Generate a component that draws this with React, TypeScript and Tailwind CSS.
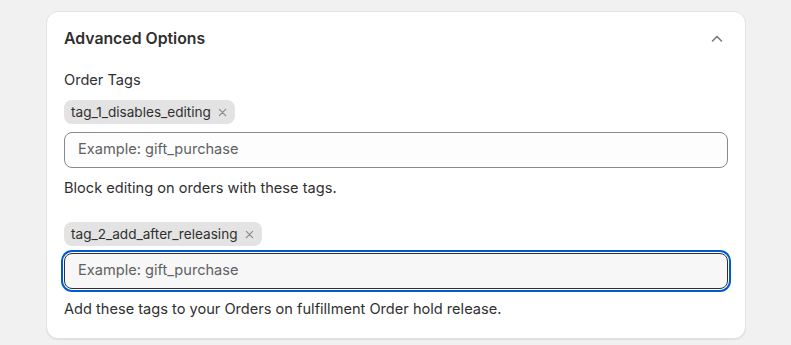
import React from 'react';

const TagChip = ({ label }: { label: string }) => (
  <div className="inline-flex items-center gap-[7px] rounded-lg bg-[#e3e3e3] pl-[7px] pr-[8px] h-[24px] text-[13.6px] text-[#303030]">
    <span>{label}</span>
    <svg width="9" height="9" viewBox="0 0 10 10" fill="none" stroke="#8a8a8a" strokeWidth="1.3" strokeLinecap="round">
      <path d="M1.5 1.5l7 7M8.5 1.5l-7 7" />
    </svg>
  </div>
);

export default function App() {
  return (
    <div className="min-h-[345px] bg-[#f1f1f1] pl-[46px] pr-[45px] pt-[11px] pb-2" style={{ fontFamily: 'Inter, "Noto Sans", sans-serif' }}>
      <div className="rounded-xl bg-white border border-[#e3e3e3] shadow-[0_1px_0_rgba(0,0,0,0.08)] px-[17px] pt-[16px] pb-[19px]">
        <div className="flex items-center justify-between h-[22px]">
          <h2 className="text-[15.8px] font-semibold text-[#303030]">Advanced Options</h2>
          <svg width="12" height="8" viewBox="0 0 12 8" fill="none" stroke="#7a7a7a" strokeWidth="1.6" strokeLinecap="round" strokeLinejoin="round" className="mr-[5px]">
            <path d="M1.5 6l4.5-4.5 4.5 4.5" />
          </svg>
        </div>

        <div className="text-[14.6px] text-[#303030]">
          <div className="mt-[20px] h-[20px] leading-5">Order Tags</div>
          <div className="mt-[10px] flex">
            <TagChip label="tag_1_disables_editing" />
          </div>
          <div className="mt-[8px] h-[36px] rounded-lg border border-[#8a8a8a] bg-[#fdfdfd] flex items-center px-[13px] text-[#616161]">
            Example: gift_purchase
          </div>
          <div className="mt-[10px] h-[20px] leading-5">Block editing on orders with these tags.</div>

          <div className="mt-[24px] flex">
            <TagChip label="tag_2_add_after_releasing" />
          </div>
          <div className="mt-[7px] h-[36px] rounded-lg border border-[#303030] bg-[#f7f7f7] flex items-center px-[13px] text-[#616161] outline-2 outline-offset-1 outline-[#005bd3]">
            Example: gift_purchase
          </div>
          <div className="mt-[10px] h-[20px] leading-5">Add these tags to your Orders on fulfillment Order hold release.</div>
        </div>
      </div>
    </div>
  );
}
